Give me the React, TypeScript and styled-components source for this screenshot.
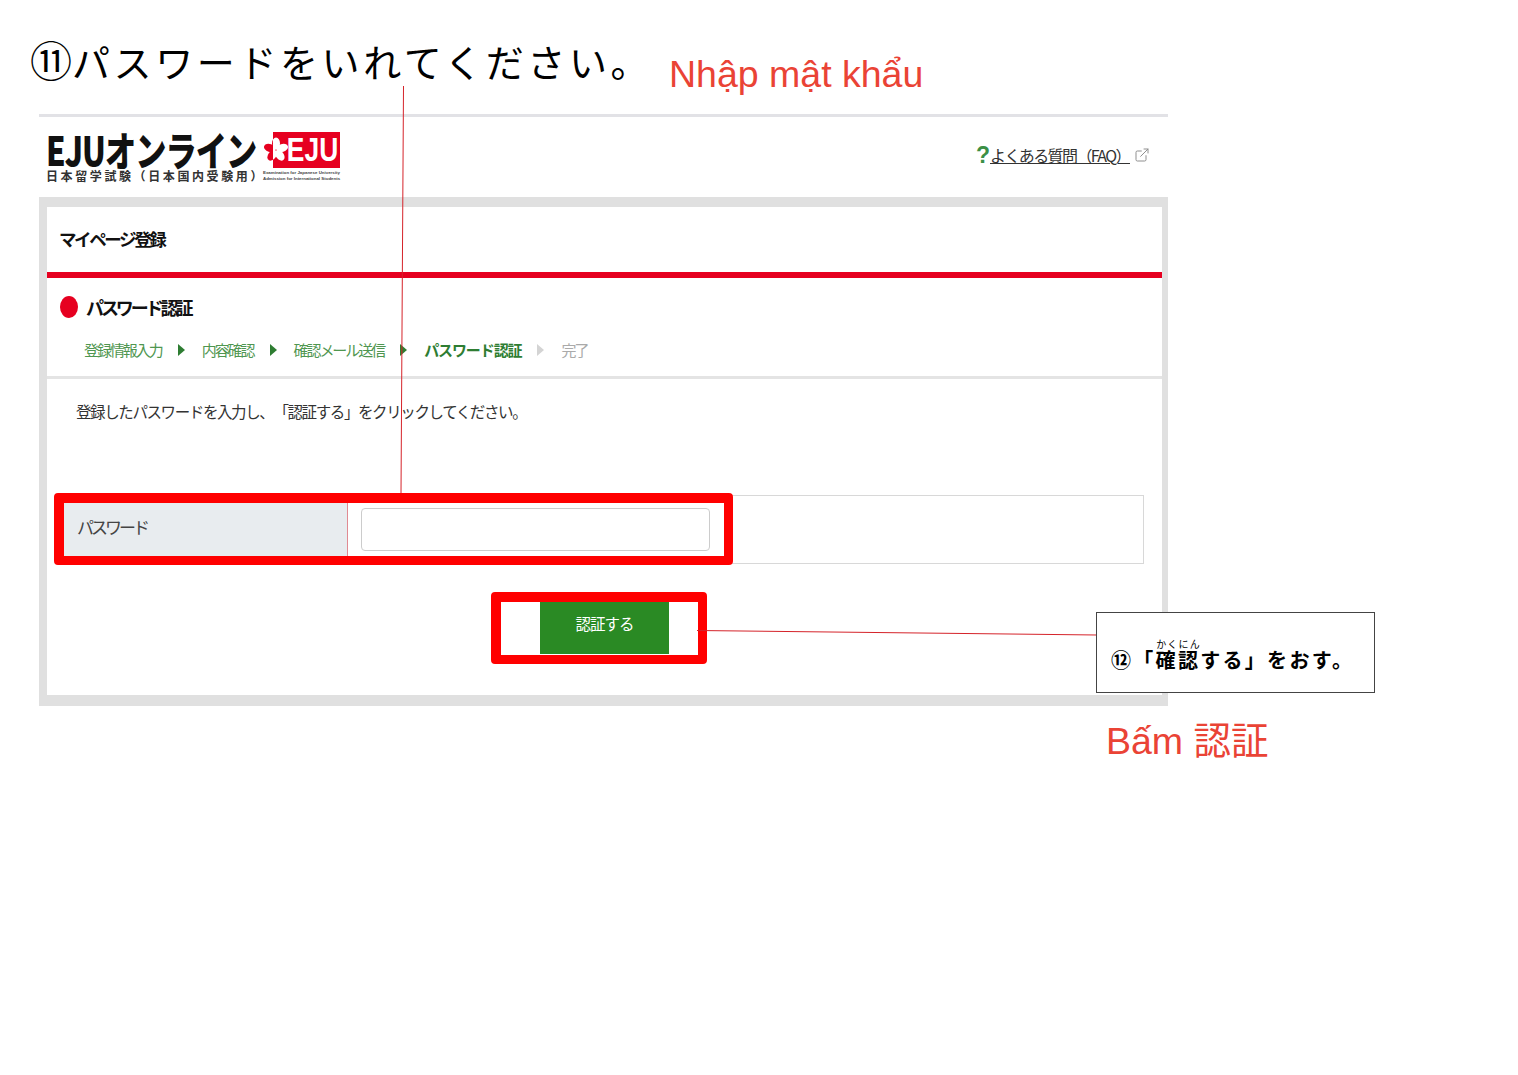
import React from "react";
import styled, { createGlobalStyle } from "styled-components";
import { ExternalLink } from "lucide-react";

const GlobalStyle = createGlobalStyle`
  html, body {
    margin: 0;
    padding: 0;
    background: #fff;
    font-family: "Noto Sans CJK JP", "Noto Sans", sans-serif;
    text-spacing-trim: space-all;
  }
`;

const Slide = styled.div`
  position: relative;
  width: 1518px;
  height: 1075px;
  overflow: hidden;
  background: #fff;
`;

const TitleRow = styled.div`
  display: flex;
  align-items: flex-start;
  height: 114px;
  padding-left: 30px;
  box-sizing: border-box;
`;

const Instruction = styled.h1`
  width: 609px;
  margin: 32px 0 0;
  font-size: 38px;
  line-height: 54px;
  font-weight: 400;
  letter-spacing: 3.6px;
  color: #000;
  white-space: nowrap;
`;

const Circled = styled.span`
  font-size: 42px;
  letter-spacing: 0;
`;

const Note = styled.div`
  font-family: "Liberation Sans", "Noto Sans CJK JP", sans-serif;
  font-size: 37.5px;
  line-height: 48px;
  color: #ea4335;
  white-space: nowrap;
`;

const TitleNote = styled(Note)`
  margin: 50px 0 0 30px;
`;

const Shot = styled.div`
  width: 1129px;
  margin-left: 39px;
  border-top: 3px solid #e2e2e6;
`;

const SiteHeader = styled.header`
  display: flex;
  justify-content: space-between;
  height: 80px;
  padding: 12px 18px 0 7px;
  box-sizing: border-box;
`;

const Logo = styled.div`
  display: flex;
  gap: 4px;
`;

const LogoText = styled.div`
  display: flex;
  flex-direction: column;
  width: 213px;
`;

const LogoTitle = styled.div`
  height: 40px;
  font-size: 40px;
  line-height: 40px;
  font-weight: 900;
  letter-spacing: -1.2px;
  color: #111;
  white-space: nowrap;
  transform: scaleX(0.78);
  transform-origin: left center;
`;

const LogoSub = styled.div`
  font-size: 12px;
  line-height: 14px;
  font-weight: 700;
  letter-spacing: 2.6px;
  color: #333;
  white-space: nowrap;
`;

const LogoMark = styled.div`
  display: flex;
  flex-direction: column;
  width: 77px;
`;

const Badge = styled.div`
  position: relative;
  display: flex;
  justify-content: flex-end;
  height: 36px;
  margin-top: 3px;
  margin-left: 10px;
  padding-right: 2px;
  background: #e60020;
  font-family: "Liberation Sans", sans-serif;
  font-size: 33px;
  line-height: 36px;
  font-weight: 700;
  color: #fff;
`;

const BadgeName = styled.span`
  transform: scaleX(0.8);
  transform-origin: right center;
`;

const Blossom = styled.svg`
  position: absolute;
  left: -10px;
  top: 5px;
`;

const Tiny = styled.div`
  margin-top: 2px;
  font-family: "Liberation Sans", sans-serif;
  font-size: 4.4px;
  line-height: 6px;
  font-weight: 700;
  color: #444;
  white-space: nowrap;
`;

const Faq = styled.div`
  display: flex;
  align-items: center;
  height: 18px;
  margin-top: 17px;
  color: #8f8f8f;
`;

const FaqMark = styled.span`
  width: 14px;
  font-family: "Liberation Sans", sans-serif;
  font-size: 23px;
  font-weight: 700;
  color: #3b8f45;
`;

const FaqLink = styled.a`
  width: 140px;
  margin-right: 4px;
  font-size: 16px;
  line-height: 18px;
  letter-spacing: -1.6px;
  color: #333;
  text-decoration: underline;
  white-space: nowrap;
`;

const Frame = styled.div`
  height: 509px;
  padding: 10px 6px 11px 8px;
  box-sizing: border-box;
  background: #e0e0e0;
`;

const Content = styled.main`
  height: 100%;
  background: #fff;
`;

const PageTitle = styled.h2`
  height: 65px;
  margin: 0;
  padding-left: 12px;
  box-sizing: border-box;
  font-size: 17.5px;
  line-height: 64px;
  font-weight: 700;
  letter-spacing: -2.4px;
  color: #111;
`;

const RedRule = styled.div`
  height: 6px;
  background: #e60020;
`;

const Section = styled.section`
  height: 101px;
  padding: 16px 0 0 13px;
  box-sizing: border-box;
  border-bottom: 3px solid #e4e4e4;
`;

const SectionTitle = styled.div`
  display: flex;
  align-items: center;
  gap: 8px;
  height: 26px;
  font-size: 18px;
  line-height: 24px;
  font-weight: 700;
  letter-spacing: -3.1px;
  color: #111;
`;

const Dot = styled.span`
  width: 18px;
  height: 22px;
  border-radius: 50%;
  background: #e60020;
`;

const Steps = styled.div`
  display: flex;
  align-items: center;
  gap: 16px;
  height: 26px;
  margin-top: 17px;
  padding-left: 24px;
`;

const Step = styled.span<{ $state?: "active" | "todo" }>`
  font-size: 15px;
  line-height: 26px;
  font-weight: ${(p) => (p.$state === "active" ? 700 : 400)};
  letter-spacing: ${(p) => (p.$state === "active" ? "-1.1px" : "-2.05px")};
  color: ${(p) => (p.$state === "active" ? "#2e7d32" : p.$state === "todo" ? "#aaa" : "#4f9650")};
  white-space: nowrap;
`;

const Arrow = styled.span<{ $off?: boolean }>`
  width: 0;
  height: 0;
  margin-right: 1px;
  border-left: 7px solid ${(p) => (p.$off ? "#d4d4d4" : "#2e7d32")};
  border-top: 6px solid transparent;
  border-bottom: 6px solid transparent;
`;

const Lead = styled.p`
  height: 116px;
  margin: 0;
  padding: 20px 0 0 29px;
  box-sizing: border-box;
  font-size: 15.5px;
  line-height: 24px;
  letter-spacing: -1.4px;
  color: #333;
`;

const FormRow = styled.div`
  display: flex;
  width: 1081px;
  height: 69px;
  margin-left: 16px;
  box-sizing: border-box;
  border: 1px solid #d8d8d8;
`;

const FieldLabel = styled.label`
  width: 284px;
  padding-left: 13px;
  box-sizing: border-box;
  border-right: 1px solid #e08a92;
  background: #e8ecef;
  font-size: 17px;
  line-height: 61px;
  letter-spacing: -3px;
  color: #444;
`;

const FieldCell = styled.div`
  display: flex;
  align-items: center;
  padding-left: 13px;
`;

const Input = styled.input`
  width: 349px;
  height: 43px;
  box-sizing: border-box;
  border: 1px solid #ccc;
  border-radius: 4px;
  background: #fff;
`;

const Actions = styled.div`
  display: flex;
  justify-content: center;
  margin-top: 38px;
`;

const SubmitButton = styled.button`
  width: 129px;
  height: 52px;
  padding: 0 0 10px;
  border: 0;
  background: #2a8a24;
  font-family: inherit;
  font-size: 15.5px;
  letter-spacing: -1px;
  color: #fff;
`;

const Highlight = styled.div<{ $x: number; $y: number; $w: number; $h: number }>`
  position: absolute;
  left: ${(p) => p.$x}px;
  top: ${(p) => p.$y}px;
  width: ${(p) => p.$w}px;
  height: ${(p) => p.$h}px;
  box-sizing: border-box;
  border: solid #ff0000;
  border-width: 10px 9px 9px 10px;
  border-radius: 4px;
`;

const Leaders = styled.svg`
  position: absolute;
  left: 0;
  top: 0;
  pointer-events: none;
`;

const Callout = styled.div`
  position: absolute;
  left: 1096px;
  top: 612px;
  width: 279px;
  height: 81px;
  padding: 25px 0 0 14px;
  box-sizing: border-box;
  border: 1px solid #444;
  background: #fff;
  font-size: 20px;
  line-height: 44px;
  font-weight: 700;
  letter-spacing: 2.3px;
  color: #000;
  white-space: nowrap;

  rt {
    font-size: 10px;
    font-weight: 400;
    letter-spacing: 0;
  }
`;

const ButtonNote = styled(Note)`
  position: absolute;
  left: 1106px;
  top: 717px;
`;

const App: React.FC = () => {
  return (
    <Slide>
      <GlobalStyle />
      <TitleRow>
        <Instruction>
          <Circled>⑪</Circled>パスワードをいれてください。
        </Instruction>
        <TitleNote>Nhập mật khẩu</TitleNote>
      </TitleRow>

      <Shot>
        <SiteHeader>
          <Logo>
            <LogoText>
              <LogoTitle>EJUオンライン</LogoTitle>
              <LogoSub>日本留学試験（日本国内受験用）</LogoSub>
            </LogoText>
            <LogoMark>
              <Badge>
                <Blossom width="26" height="26" viewBox="0 0 26 26">
                  <clipPath id="onWhite">
                    <rect x="0" y="0" width="10" height="26" />
                  </clipPath>
                  <clipPath id="onRed">
                    <rect x="10" y="0" width="16" height="26" />
                  </clipPath>
                  <g clipPath="url(#onWhite)">
                    {[0, 72, 144, 216, 288].map((deg) => (
                      <ellipse key={deg} cx="13" cy="6.5" rx="4" ry="6" fill="#e60020" transform={`rotate(${deg} 13 13)`} />
                    ))}
                  </g>
                  <g clipPath="url(#onRed)">
                    {[0, 72, 144, 216, 288].map((deg) => (
                      <ellipse key={deg} cx="13" cy="6.5" rx="4" ry="6" fill="#fff" transform={`rotate(${deg} 13 13)`} />
                    ))}
                  </g>
                </Blossom>
                <BadgeName>EJU</BadgeName>
              </Badge>
              <Tiny>
                Examination for Japanese University
                <br />
                Admission for International Students
              </Tiny>
            </LogoMark>
          </Logo>
          <Faq>
            <FaqMark>?</FaqMark>
            <FaqLink>よくある質問（FAQ）</FaqLink>
            <ExternalLink size={16} strokeWidth={1.5} />
          </Faq>
        </SiteHeader>

        <Frame>
          <Content>
            <PageTitle>マイページ登録</PageTitle>
            <RedRule />
            <Section>
              <SectionTitle>
                <Dot />
                パスワード認証
              </SectionTitle>
              <Steps>
                <Step>登録情報入力</Step>
                <Arrow />
                <Step>内容確認</Step>
                <Arrow />
                <Step>確認メール送信</Step>
                <Arrow />
                <Step $state="active">パスワード認証</Step>
                <Arrow $off />
                <Step $state="todo">完了</Step>
              </Steps>
            </Section>
            <Lead>登録したパスワードを入力し、「認証する」をクリックしてください。</Lead>
            <FormRow>
              <FieldLabel>パスワード</FieldLabel>
              <FieldCell>
                <Input type="password" />
              </FieldCell>
            </FormRow>
            <Actions>
              <SubmitButton>認証する</SubmitButton>
            </Actions>
          </Content>
        </Frame>
      </Shot>

      <Highlight $x={54} $y={493} $w={679} $h={72} />
      <Highlight $x={491} $y={592} $w={216} $h={72} />
      <Leaders width="1518" height="1075">
        <line x1="403.5" y1="86" x2="401" y2="493" stroke="#d5232a" strokeWidth="1" />
        <line x1="697" y1="630.5" x2="1097" y2="635" stroke="#d5232a" strokeWidth="1" />
      </Leaders>
      <Callout>
        ⑫「
        <ruby>
          確認<rt>かくにん</rt>
        </ruby>
        する」をおす。
      </Callout>
      <ButtonNote>Bấm 認証</ButtonNote>
    </Slide>
  );
};

export default App;
